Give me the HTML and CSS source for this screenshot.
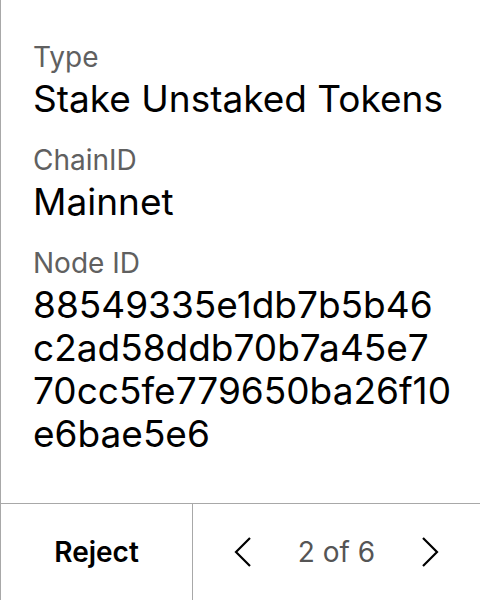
FILE: index.html
```html
<!DOCTYPE html>
<html>
<head>
<meta charset="utf-8">
<link rel="stylesheet" href="styles.css">
</head>
<body>
<div class="screen">
  <div class="content">
    <div class="field">
      <div class="label">Type</div>
      <div class="value">Stake Unstaked Tokens</div>
    </div>
    <div class="field">
      <div class="label">ChainID</div>
      <div class="value">Mainnet</div>
    </div>
    <div class="field">
      <div class="label">Node ID</div>
      <div class="value">88549335e1db7b5b46<br>c2ad58ddb70b7a45e7<br>70cc5fe779650ba26f10<br>e6bae5e6</div>
    </div>
  </div>
  <div class="footer">
    <div class="reject">Reject</div>
    <div class="pager">
      <svg class="chev" width="20" height="32" viewBox="0 0 20 32"><path d="M17 2 L3 16 L17 30" fill="none" stroke="#000" stroke-width="2.2"/></svg>
      <span class="count">2 of 6</span>
      <svg class="chev" width="20" height="32" viewBox="0 0 20 32"><path d="M3 2 L17 16 L3 30" fill="none" stroke="#000" stroke-width="2.2"/></svg>
    </div>
  </div>
</div>
</body>
</html>
```
FILE: styles.css
```css
html, body {
  margin: 0;
  padding: 0;
  background: #fff;
}
body {
  font-family: Inter, "Noto Sans", sans-serif;
  color: #000;
}
.screen {
  width: 480px;
  height: 600px;
  box-sizing: border-box;
  border-left: 1px solid #a8a8a8;
  display: flex;
  flex-direction: column;
}
.content {
  flex: 1;
  padding: 37px 0 0 32px;
  display: flex;
  flex-direction: column;
  gap: 20px;
}
.label {
  font-size: 28px;
  line-height: 40px;
  color: #606060;
}
.value {
  font-size: 37px;
  line-height: 43px;
  color: #000;
}
.footer {
  height: 96px;
  border-top: 1px solid #a8a8a8;
  display: flex;
}
.reject {
  width: 191px;
  border-right: 1px solid #a8a8a8;
  display: flex;
  align-items: center;
  justify-content: center;
  font-size: 28px;
  font-weight: 600;
}
.pager {
  flex: 1;
  display: flex;
  align-items: center;
  justify-content: space-between;
  padding: 0 40px;
}
.count {
  font-size: 28px;
  color: #555;
}
.chev {
  display: block;
}
```
